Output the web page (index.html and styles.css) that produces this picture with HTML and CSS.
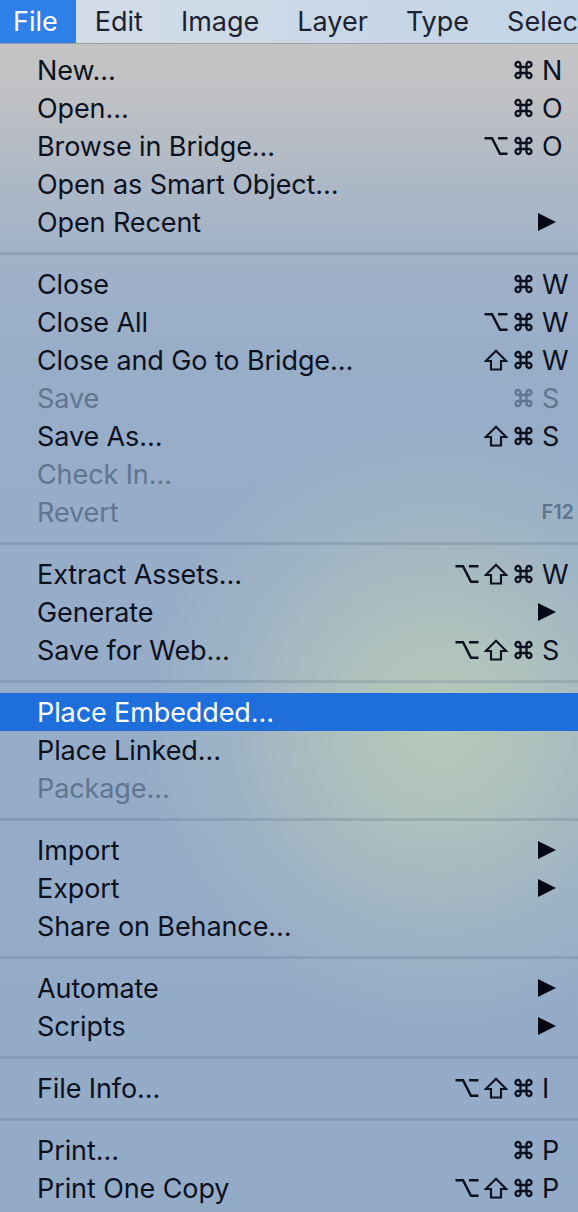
FILE: index.html
```html
<!DOCTYPE html>
<html lang="en">
<head>
<meta charset="utf-8">
<title>File menu</title>
<link rel="stylesheet" href="styles.css">
</head>
<body>
<svg class="defs" width="0" height="0" aria-hidden="true">
  <defs>
    <symbol id="cmd" viewBox="0 0 21 20"><path d="M7.5 7V4.6A2.5 2.5 0 1 0 5 7H16A2.5 2.5 0 1 0 13.5 4.6V15.4A2.5 2.5 0 1 0 16 13H5A2.5 2.5 0 1 0 7.5 15.4Z" fill="none" stroke="currentColor" stroke-width="2.3" stroke-linejoin="round"/></symbol>
    <symbol id="shift" viewBox="0 0 24 22"><path d="M12 1.8L22.3 12H17V20.5H7V12H1.7Z" fill="none" stroke="currentColor" stroke-width="2.1" stroke-linejoin="miter"/></symbol>
    <symbol id="opt" viewBox="0 0 24 20"><path d="M0.5 2.2H8L16 17.8H23.5M14 2.2H23.5" fill="none" stroke="currentColor" stroke-width="2.5"/></symbol>
    <symbol id="tri" viewBox="0 0 18 18"><path d="M0 0L18 9L0 18Z" fill="currentColor"/></symbol>
  </defs>
</svg>
<div class="menubar">
  <span class="mb-item active">File</span>
  <span class="mb-item">Edit</span>
  <span class="mb-item">Image</span>
  <span class="mb-item">Layer</span>
  <span class="mb-item">Type</span>
  <span class="mb-item">Select</span>
</div>
<div class="menu">
  <div class="row"><span class="label">New…</span><span class="sc"><svg class="m cmd"><use href="#cmd"/></svg><span class="key">N</span></span></div>
  <div class="row"><span class="label">Open…</span><span class="sc"><svg class="m cmd"><use href="#cmd"/></svg><span class="key">O</span></span></div>
  <div class="row"><span class="label">Browse in Bridge…</span><span class="sc"><svg class="m opt"><use href="#opt"/></svg><svg class="m cmd"><use href="#cmd"/></svg><span class="key">O</span></span></div>
  <div class="row"><span class="label">Open as Smart Object…</span></div>
  <div class="row"><span class="label">Open Recent</span><svg class="arrow"><use href="#tri"/></svg></div>
  <div class="sep"></div>
  <div class="row"><span class="label">Close</span><span class="sc"><svg class="m cmd"><use href="#cmd"/></svg><span class="key">W</span></span></div>
  <div class="row"><span class="label">Close All</span><span class="sc"><svg class="m opt"><use href="#opt"/></svg><svg class="m cmd"><use href="#cmd"/></svg><span class="key">W</span></span></div>
  <div class="row"><span class="label">Close and Go to Bridge…</span><span class="sc"><svg class="m shift"><use href="#shift"/></svg><svg class="m cmd"><use href="#cmd"/></svg><span class="key">W</span></span></div>
  <div class="row disabled"><span class="label">Save</span><span class="sc"><svg class="m cmd"><use href="#cmd"/></svg><span class="key">S</span></span></div>
  <div class="row"><span class="label">Save As…</span><span class="sc"><svg class="m shift"><use href="#shift"/></svg><svg class="m cmd"><use href="#cmd"/></svg><span class="key">S</span></span></div>
  <div class="row disabled"><span class="label">Check In…</span></div>
  <div class="row disabled"><span class="label">Revert</span><span class="fkey">F12</span></div>
  <div class="sep"></div>
  <div class="row"><span class="label">Extract Assets…</span><span class="sc"><svg class="m opt"><use href="#opt"/></svg><svg class="m shift"><use href="#shift"/></svg><svg class="m cmd"><use href="#cmd"/></svg><span class="key">W</span></span></div>
  <div class="row"><span class="label">Generate</span><svg class="arrow"><use href="#tri"/></svg></div>
  <div class="row"><span class="label">Save for Web…</span><span class="sc"><svg class="m opt"><use href="#opt"/></svg><svg class="m shift"><use href="#shift"/></svg><svg class="m cmd"><use href="#cmd"/></svg><span class="key">S</span></span></div>
  <div class="sep"></div>
  <div class="row selected"><span class="label">Place Embedded…</span></div>
  <div class="row"><span class="label">Place Linked…</span></div>
  <div class="row disabled"><span class="label">Package…</span></div>
  <div class="sep"></div>
  <div class="row"><span class="label">Import</span><svg class="arrow"><use href="#tri"/></svg></div>
  <div class="row"><span class="label">Export</span><svg class="arrow"><use href="#tri"/></svg></div>
  <div class="row"><span class="label">Share on Behance…</span></div>
  <div class="sep"></div>
  <div class="row"><span class="label">Automate</span><svg class="arrow"><use href="#tri"/></svg></div>
  <div class="row"><span class="label">Scripts</span><svg class="arrow"><use href="#tri"/></svg></div>
  <div class="sep"></div>
  <div class="row"><span class="label">File Info…</span><span class="sc"><svg class="m opt"><use href="#opt"/></svg><svg class="m shift"><use href="#shift"/></svg><svg class="m cmd"><use href="#cmd"/></svg><span class="key">I</span></span></div>
  <div class="sep"></div>
  <div class="row"><span class="label">Print…</span><span class="sc"><svg class="m cmd"><use href="#cmd"/></svg><span class="key">P</span></span></div>
  <div class="row"><span class="label">Print One Copy</span><span class="sc"><svg class="m opt"><use href="#opt"/></svg><svg class="m shift"><use href="#shift"/></svg><svg class="m cmd"><use href="#cmd"/></svg><span class="key">P</span></span></div>
</div>
</body>
</html>
```

FILE: styles.css
```css
html, body {
  margin: 0;
  padding: 0;
}
body {
  width: 578px;
  height: 1212px;
  overflow: hidden;
  font-family: "Inter", "Noto Sans", "DejaVu Sans", sans-serif;
  color: #0c111f;
  background: #94abc8;
}
.defs {
  position: absolute;
  width: 0;
  height: 0;
}
.menubar {
  height: 43px;
  display: flex;
  align-items: center;
  background: linear-gradient(to right, #d6dee9, #c9d7e6 60%, #c2d5e6);
  border-bottom: 1px solid #9c9fa3;
  font-size: 27px;
  color: #1b2232;
  white-space: nowrap;
  overflow: hidden;
}
.mb-item {
  flex: none;
  height: 43px;
  line-height: 43px;
  margin-right: 38px;
}
.mb-item.active {
  background: #2f80e8;
  color: #fff;
  padding: 0 18px 0 13px;
  margin-right: 19px;
}
.menu {
  height: 1168px;
  padding-top: 7px;
  box-sizing: border-box;
  background:
    radial-gradient(ellipse 300px 300px at 440px 680px, rgba(183, 201, 185, 1), rgba(183, 201, 185, 0.7) 35%, rgba(183, 201, 185, 0.25) 70%, rgba(183, 201, 185, 0) 100%),
    linear-gradient(to bottom, #c4c4c4 0px, #bec0c4 60px, #afb9c6 130px, #a1b2c8 210px, #97adc8 320px, #94abc8 100%);
}
.row {
  height: 38px;
  display: flex;
  align-items: center;
  justify-content: space-between;
  padding: 0 10px 0 37px;
  font-size: 27px;
  letter-spacing: -0.1px;
  white-space: nowrap;
}
.row.disabled {
  color: #5e7690;
}
.row.selected {
  background: #1e6fdc;
  color: #fff;
}
.sc {
  display: flex;
  align-items: center;
}
.m {
  height: 20px;
  margin-right: 5px;
  color: inherit;
}
.m.cmd {
  width: 21px;
  margin-right: 8px;
}
.m.shift {
  width: 24px;
  height: 22px;
}
.m.opt {
  width: 24px;
}
.key {
  width: 26px;
  text-align: left;
}
.arrow {
  width: 18px;
  height: 18px;
  margin-right: 12px;
  color: #030814;
}
.fkey {
  font-size: 20px;
  font-weight: 600;
  margin-right: -6px;
}
.sep {
  height: 3px;
  margin: 11px 0 10px;
  background: rgba(50, 75, 110, 0.16);
}
```
